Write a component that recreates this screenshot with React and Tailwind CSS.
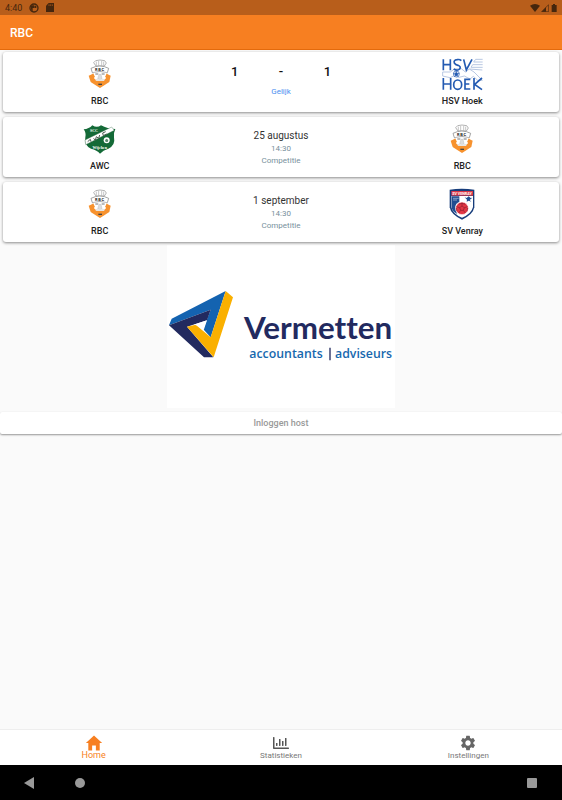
import { IoMdHome } from "react-icons/io";
import { FaRegChartBar } from "react-icons/fa";
import { MdSettings } from "react-icons/md";

function RbcCrest() {
  return (
    <svg viewBox="22 18 132 99" className="w-11 h-[33px]" aria-hidden="true">
      <path d="M54 71 L67 65 H108 L120 71 L116 90 L88 108 L60 90 Z" fill="#f7922e" />
      <path d="M69 32 L75 26 L88 24 L102 26 L107 33 L101 42 H76 Z" fill="#fff" stroke="#8c8c8c" strokeWidth="2" />
      <path d="M77 29 V41 M84 27 V41 M93 27 V41 M99 29 V41" stroke="#aaa" strokeWidth="2" />
      <path d="M61 49 Q88 35 114 49 L110 62 Q88 55 65 62 Z" fill="#fff" stroke="#777" strokeWidth="2" />
      <text x="88" y="56" textAnchor="middle" fontSize="12" fontWeight="700" letterSpacing="2" fill="#222" fontFamily="Roboto, sans-serif">RBC</text>
      <path d="M67 62 H109 L105 80 L88 91 L71 80 Z" fill="#fff" />
      <path d="M67 63 L64 79 L73 75 Z M109 63 L112 79 L103 75 Z" fill="#f7922e" />
      <path d="M74 66 H83 M93 66 H102" stroke="#777" strokeWidth="3" />
      <path d="M85 67 H91 L94 80 L88 83 L81 80 Z" fill="#ddd" stroke="#aaa" strokeWidth="1" />
      <path d="M73 83 Q80 78 88 83 Q96 78 103 83 L99 88 H78 Z" fill="#e6e6e6" />
      <path d="M74 87 H103 L97 101 H80 Z" fill="#f7922e" />
      <path d="M83 97 H94" stroke="#444" strokeWidth="4" />
    </svg>
  );
}

function HoekCrest() {
  return (
    <svg viewBox="45 24 132 99" className="w-11 h-[33px]" aria-hidden="true">
      <g fill="none" stroke="#b9c8e2" strokeWidth="3">
        <path d="M173 28 H152 L146 36 H173 M173 44 H143 L138 52 H173 M172 60 L133 57" />
        <path d="M53 66 H76 L88 57 L109 56 L121 66 L133 57 L147 66 L172 91" />
        <path d="M53 66 V78 L75 83 L86 78 L102 82 L118 78 L135 87 L145 79 L158 91 H172" />
      </g>
      <g fill="none" stroke="#245bb2" strokeWidth="5">
        <path d="M55 28 V61 M76 28 V61 M55 44 H76" />
        <path d="M109 32 Q104 27 96 29 Q85 31 88 39 Q91 44 99 46 Q109 50 104 57 Q97 64 86 57" />
        <path d="M116 28 L124 60 L141 28" />
        <path d="M55 84 V119 M77 84 V119 M55 102 H77" />
        <ellipse cx="98" cy="104" rx="12" ry="14" />
        <path d="M136 88 H120 V117 H136 M120 102 H133" />
        <path d="M147 84 V119 M171 84 L149 103 L171 119" />
      </g>
      <circle cx="94" cy="72" r="9" fill="#fff" stroke="#245bb2" strokeWidth="2" />
      <path d="M94 67 L99 71 L97 77 H91 L89 71 Z M94 63 V67 M85 70 L89 71 M103 70 L99 71 M88 80 L91 77 M100 80 L97 77" fill="#245bb2" stroke="#245bb2" strokeWidth="2" />
    </svg>
  );
}

function AwcCrest() {
  return (
    <svg viewBox="22 24 132 99" className="w-11 h-[33px]" aria-hidden="true">
      <path d="M39 43 Q55 42 65 31 Q79 40 91 31 Q110 42 134 42 Q128 54 130 67 Q135 91 113 101 Q97 105 88 116 Q79 105 61 101 Q39 91 44 67 Q47 53 39 43 Z" fill="#146a37" />
      <path d="M43 75 L123 36 L131 46 L45 89 Z" fill="#fff" stroke="#205c38" strokeWidth="1" />
      <path d="M51 80 L59 73 L61 80 M69 70 L74 76 L77 65 L84 70 L87 60 M105 50 L96 54 L98 62 L108 57" fill="none" stroke="#4a5c50" strokeWidth="3" />
      <text x="70" y="51" textAnchor="middle" fontSize="12" fontWeight="700" fill="#fff" fontFamily="Liberation Serif, serif">SCC</text>
      <circle cx="108" cy="76" r="9" fill="#fff" />
      <path d="M108 71 L113 75 L111 81 H105 L103 75 Z" fill="#5d8c70" />
      <text x="87" y="101" textAnchor="middle" fontSize="12" fontWeight="700" fill="#fff" fontFamily="Liberation Serif, serif">Wijchen</text>
    </svg>
  );
}

function VenrayCrest() {
  return (
    <svg viewBox="45 24 132 99" className="w-11 h-[33px]" aria-hidden="true">
      <path d="M74 29 Q110 23 148 29 V82 Q144 104 111 119 Q78 104 74 82 Z" fill="#173d7b" />
      <path d="M79 48 H144 V81 Q139 102 111 113 Q83 102 79 81 Z" fill="#fff" />
      <path d="M80 49 H103 V66 Q92 69 91 81 Q91 92 97 102 Q80 93 80 80 Z" fill="#214d91" />
      <path d="M119 52 L125 54 L131 49 L137 54 L142 53 L134 60 L139 65 L131 62 L125 65 L126 59 Z" fill="#214d91" />
      <path d="M84 55 H101 M84 60 H96" stroke="#bdc9df" strokeWidth="2" />
      <rect x="79" y="33" width="65" height="14" fill="#dc3545" />
      <text x="111" y="44" textAnchor="middle" fontSize="11" fontWeight="700" fill="#fff" fontFamily="Roboto, sans-serif">SV VENRAY</text>
      <circle cx="111" cy="85" r="19" fill="#e23745" stroke="#fff" strokeWidth="2" />
      <path d="M111 78 L118 83 L115 91 H107 L104 83 Z M111 68 V78 M94 80 L104 83 M128 80 L118 83 M101 99 L107 91 M121 99 L115 91 M101 73 L111 70 L121 73 M96 94 L94 84 M126 94 L128 84" fill="none" stroke="#8d2031" strokeWidth="2" />
    </svg>
  );
}

function SponsorLogo() {
  return (
    <svg viewBox="21 15 684 489" className="w-full" role="img" aria-label="Vermetten accountants | adviseurs">
      <path d="M197 153 L35 236 L27 256 L152 209 L130 268 L152 292 Z" fill="#1463b0" />
      <path d="M27 256 L152 209 L141 241 L81 260 L160 352 H132 Z" fill="#222a5f" />
      <path d="M197 153 L219 172 L161 352 L81 260 L107 254 L152 292 Z" fill="#fab000" />
      <path d="M101 254 L141 241 L131 271 L119 257 Z" fill="#fff" />
      <text x="252" y="296" fontSize="94" fontWeight="700" fill="#222a5f" fontFamily="Lato, sans-serif" className="[font-variant-ligatures:none]">Vermetten</text>
      <text x="268" y="353" fontSize="37" fontWeight="600" fill="#1768ae" fontFamily="Open Sans, sans-serif">accountants</text>
      <path d="M510 323 V361" stroke="#222a5f" strokeWidth="4" />
      <text x="525" y="353" fontSize="37" fontWeight="600" fill="#1768ae" fontFamily="Open Sans, sans-serif">adviseurs</text>
    </svg>
  );
}

const matches = [
  { home: "RBC", homeCrest: <RbcCrest />, away: "HSV Hoek", awayCrest: <HoekCrest />, score: [1, 1], result: "Gelijk" },
  { home: "AWC", homeCrest: <AwcCrest />, away: "RBC", awayCrest: <RbcCrest />, date: "25 augustus", time: "14:30", type: "Competitie" },
  { home: "RBC", homeCrest: <RbcCrest />, away: "SV Venray", awayCrest: <VenrayCrest />, date: "1 september", time: "14:30", type: "Competitie" },
];

function Team({ crest, name }) {
  return (
    <div className="flex flex-col items-center gap-1 pt-[6px] text-[9px] leading-3 font-medium text-[#222]">
      {crest}
      <span>{name}</span>
    </div>
  );
}

function MatchCard({ match }) {
  return (
    <article className="grid grid-cols-[8fr_7fr_8fr] h-15 bg-white rounded-[3px] shadow-[0_1px_3px_rgba(0,0,0,0.45)]">
      <Team crest={match.homeCrest} name={match.home} />
      {match.score ? (
        <div className="flex flex-col gap-1 px-[15px] pt-3 text-center">
          <div className="grid grid-cols-3 text-[13px] leading-4 font-medium text-[#111]">
            <span>{match.score[0]}</span>
            <span>-</span>
            <span>{match.score[1]}</span>
          </div>
          <span className="pt-[2px] text-[8px] leading-3 text-[#4a8ff0]">{match.result}</span>
        </div>
      ) : (
        <div className="flex flex-col items-center pt-3 text-[8px] leading-3 text-[#78909c]">
          <span className="text-[10px] leading-[14px] text-[#333]">{match.date}</span>
          <span>{match.time}</span>
          <span>{match.type}</span>
        </div>
      )}
      <Team crest={match.awayCrest} name={match.away} />
    </article>
  );
}

function StatusBar() {
  return (
    <div className="flex items-center justify-between h-[15px] pl-[5px] pr-1 bg-[#b85e1b] text-[#45260d]">
      <div className="flex items-center gap-[7px] text-[9px] leading-3">
        <span>4:40</span>
        <svg viewBox="0 0 30 30" className="size-[10px]" aria-hidden="true">
          <circle cx="15" cy="15" r="12" fill="none" stroke="currentColor" strokeWidth="4" />
          <path d="M5 7 H15 V15 H11 V25 H7 Z" fill="currentColor" />
          <path d="M16 8 H22 V15 H16 Z" fill="currentColor" />
        </svg>
        <svg viewBox="0 0 24 27" className="w-2 h-[9px]" aria-hidden="true">
          <path d="M8 0 H24 V27 H0 V8 Z" fill="currentColor" />
          <path d="M9 4 V9 M14 4 V9 M19 4 V9" stroke="#b85e1b" strokeWidth="2" />
        </svg>
      </div>
      <div className="flex items-center gap-px">
        <svg viewBox="0 0 30 24" className="w-[10px] h-2" aria-hidden="true">
          <path d="M0 5 Q15 -5 30 5 L15 24 Z" fill="currentColor" />
        </svg>
        <svg viewBox="0 0 24 24" className="size-2" aria-hidden="true">
          <path d="M2 23 L23 2 V23 Z" fill="none" stroke="currentColor" strokeWidth="2" />
          <path d="M2 23 L15 10 V23 Z" fill="currentColor" />
        </svg>
        <svg viewBox="0 0 24 24" className="size-2" aria-hidden="true">
          <path d="M5 3 H9 V0 H15 V3 H20 V24 H5 Z" fill="currentColor" />
        </svg>
      </div>
    </div>
  );
}

export default function App() {
  return (
    <div className="flex flex-col min-h-screen bg-[#fafafa] font-[Roboto,sans-serif]">
      <StatusBar />
      <header className="flex items-center h-[35px] px-[10px] bg-[#f77f21] border-b border-[#e36a0c]">
        <h1 className="pt-[2px] text-[12px] leading-4 font-medium text-white">RBC</h1>
      </header>

      <main className="flex-1">
        <section className="flex flex-col gap-[5px] px-[3px] pt-[2px]">
          {matches.map((match, i) => (
            <MatchCard key={i} match={match} />
          ))}
        </section>

        <div className="w-[228px] mx-auto mt-[3px] bg-white">
          <SponsorLogo />
        </div>

        <button type="button" className="block w-full h-[22px] mt-1 bg-white rounded-[2px] text-[9px] leading-3 font-medium text-[#999] shadow-[0_1px_2px_rgba(0,0,0,0.4)]">
          Inloggen host
        </button>
      </main>

      {/* Tabs */}
      <nav className="grid grid-cols-3 h-9 bg-white border-t border-[#eee] text-[8px] text-[#777]">
        <a href="#home" className="flex flex-col items-center pt-[3px] text-[#f77f21]">
          <IoMdHome className="size-5" />
          <span className="-mt-[3px] text-[9px] leading-[10px]">Home</span>
        </a>
        <a href="#statistieken" className="flex flex-col items-center pt-[5px]">
          <FaRegChartBar className="size-4 text-[#555]" />
          <span className="leading-[10px]">Statistieken</span>
        </a>
        <a href="#instellingen" className="flex flex-col items-center pt-1">
          <MdSettings className="size-[18px] text-[#666]" />
          <span className="-mt-px leading-[10px]">Instellingen</span>
        </a>
      </nav>

      {/* Android system buttons */}
      <div className="flex items-center h-[35px] pl-6 pr-[25px] bg-black text-[#999]">
        <button type="button" aria-label="Terug">
          <svg viewBox="0 0 10 12" className="w-[10px] h-3"><path d="M0 6 L10 0 V12 Z" fill="currentColor" /></svg>
        </button>
        <button type="button" aria-label="Startscherm" className="size-[10px] ml-[41px] rounded-full bg-[#999]" />
        <button type="button" aria-label="Recente apps" className="size-[10px] ml-auto rounded-[1px] bg-[#999]" />
      </div>
    </div>
  );
}
